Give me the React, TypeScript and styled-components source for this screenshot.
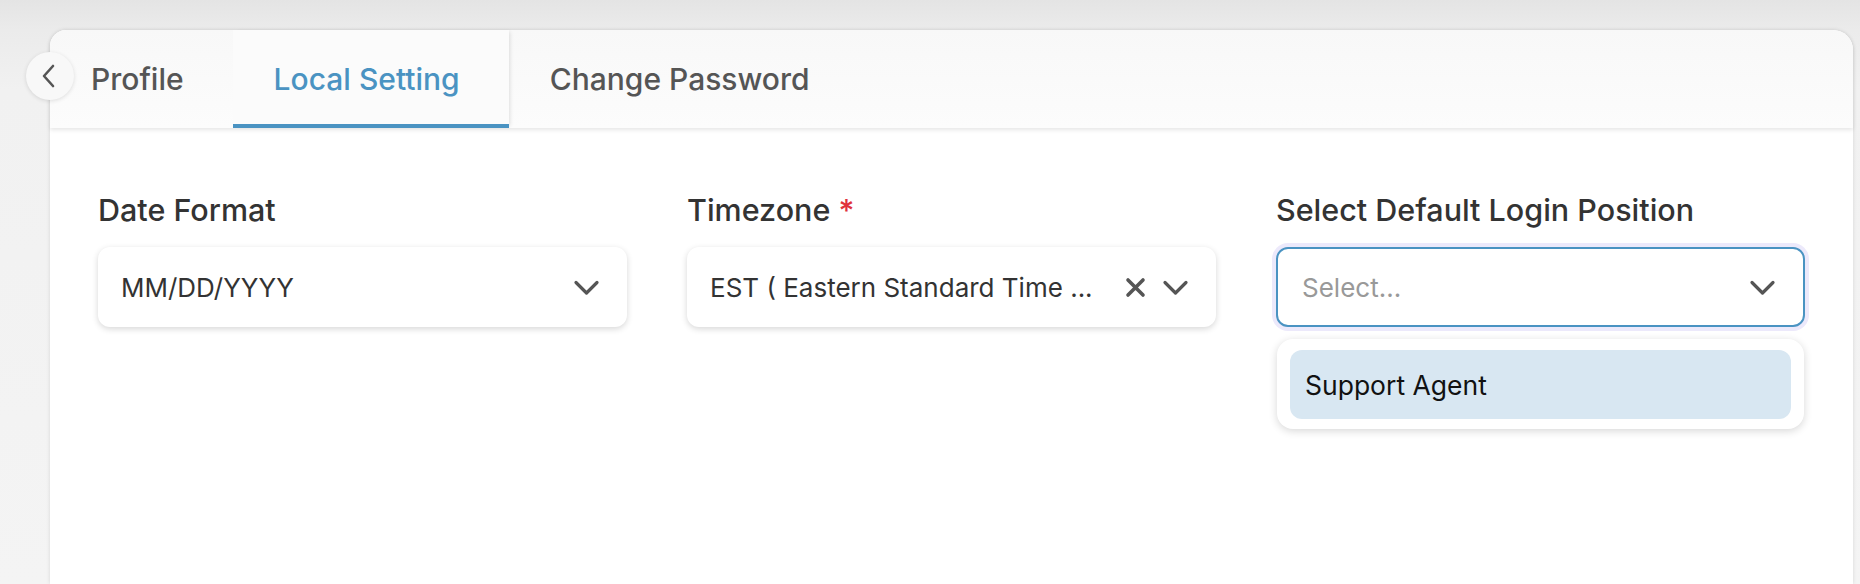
import React from 'react';
import styled, { createGlobalStyle } from 'styled-components';

const tabs = ['Profile', 'Local Setting', 'Change Password'];

const Chevron: React.FC = () => (
  <svg width="27" height="17" viewBox="0 0 27 17" fill="none">
    <path d="M3 3.5 L13.5 14 L24 3.5" stroke="#555" strokeWidth="3.2" strokeLinecap="round" strokeLinejoin="round" />
  </svg>
);

const Cross: React.FC = () => (
  <svg width="21" height="21" viewBox="0 0 21 21" fill="none">
    <path d="M3 3 L18 18 M18 3 L3 18" stroke="#555" strokeWidth="3.6" strokeLinecap="round" />
  </svg>
);

const App: React.FC = () => {
  return (
    <>
      <GlobalStyle />
      <Page>
        <Card>
          <BackButton aria-label="back">
            <svg width="16" height="26" viewBox="0 0 16 26" fill="none">
              <path d="M12 3 L3 13 L12 23" stroke="#555" strokeWidth="2.6" strokeLinecap="round" strokeLinejoin="round" />
            </svg>
          </BackButton>
          <TabBar>
            {tabs.map((t, i) => (
              <Tab key={t} $active={i === 1}>
                {t}
              </Tab>
            ))}
          </TabBar>
          <Body>
            <Field>
              <Label>Date Format</Label>
              <SelectBox>
                <Value>MM/DD/YYYY</Value>
                <Icons>
                  <Chevron />
                </Icons>
              </SelectBox>
            </Field>
            <Field>
              <Label>
                Timezone <Required>*</Required>
              </Label>
              <SelectBox>
                <Value>EST ( Eastern Standard Time ...</Value>
                <Icons>
                  <Cross />
                  <Chevron />
                </Icons>
              </SelectBox>
            </Field>
            <Field>
              <Label>Select Default Login Position</Label>
              <SelectWrap>
                <SelectBox $focused>
                  <Value $placeholder>Select...</Value>
                  <Icons>
                    <Chevron />
                  </Icons>
                </SelectBox>
                <Menu>
                  <Option>Support Agent</Option>
                </Menu>
              </SelectWrap>
            </Field>
          </Body>
        </Card>
      </Page>
    </>
  );
};

const GlobalStyle = createGlobalStyle`
  * { box-sizing: border-box; }
  body {
    margin: 0;
    background: #f3f3f3;
    font-family: Inter, "Noto Sans", sans-serif;
  }
`;

const Page = styled.div`
  height: 584px;
  overflow: hidden;
  padding: 30px 7px 0 50px;
  background: linear-gradient(#e4e4e4 0, #ebebeb 30px, #f1f1f1 90px, #f4f4f4 100%);
`;

const Card = styled.div`
  position: relative;
  height: 100%;
  background: #fff;
  border-radius: 16px 20px 0 0;
  box-shadow: 0 0 4px rgba(0, 0, 0, 0.12);
`;

const BackButton = styled.div`
  position: absolute;
  left: -24px;
  top: 22px;
  width: 48px;
  height: 48px;
  border-radius: 50%;
  background: #f8f8f8;
  box-shadow: 0 1px 4px rgba(0, 0, 0, 0.12);
  display: flex;
  align-items: center;
  justify-content: center;
  padding-right: 3px;
  z-index: 2;
`;

const TabBar = styled.div`
  display: flex;
  height: 98px;
  border-radius: 16px 20px 0 0;
  background: linear-gradient(#f8f8f8, #fcfcfc);
  box-shadow: 0 2px 4px rgba(0, 0, 0, 0.1);
`;

const Tab = styled.div<{ $active?: boolean }>`
  display: flex;
  align-items: center;
  padding: 0 49px 0 41px;
  font-size: 30px;
  font-weight: 500;
  color: ${(p) => (p.$active ? '#4a93c2' : '#555')};
  background: ${(p) => (p.$active ? '#fbfbfb' : 'transparent')};
  box-shadow: ${(p) =>
    p.$active ? 'inset 0 -4px 0 #4a93c2, 3px 0 4px -2px rgba(0,0,0,0.12)' : 'none'};
`;

const Body = styled.div`
  display: grid;
  grid-template-columns: repeat(3, 1fr);
  gap: 60px;
  padding: 64px 48px 0 48px;
`;

const Field = styled.div`
  display: flex;
  flex-direction: column;
`;

const Label = styled.div`
  font-size: 30.5px;
  font-weight: 500;
  line-height: 36px;
  color: #333;
  margin-bottom: 19px;
`;

const Required = styled.span`
  color: #e0333b;
  font-weight: 500;
`;

const SelectWrap = styled.div`
  position: relative;
`;

const SelectBox = styled.div<{ $focused?: boolean }>`
  display: flex;
  align-items: center;
  height: 80px;
  padding: 0 27px 0 ${(p) => (p.$focused ? '24px' : '23px')};
  background: #fff;
  border-radius: 12px;
  border: ${(p) => (p.$focused ? '2px solid #4a93c2' : 'none')};
  box-shadow: ${(p) =>
    p.$focused ? '0 0 0 4px #ece9fb' : '0 2px 6px rgba(0, 0, 0, 0.16)'};
`;

const Value = styled.div<{ $placeholder?: boolean }>`
  flex: 1;
  font-size: 26px;
  color: ${(p) => (p.$placeholder ? '#999' : '#333')};
  white-space: nowrap;
  overflow: hidden;
`;

const Icons = styled.div`
  display: flex;
  align-items: center;
  gap: 16px;
`;

const Menu = styled.div`
  position: absolute;
  top: calc(100% + 12px);
  left: 1px;
  right: 1px;
  padding: 11px 13px 10px;
  background: #fff;
  border-radius: 16px;
  box-shadow: 0 2px 8px rgba(0, 0, 0, 0.16);
`;

const Option = styled.div`
  display: flex;
  align-items: center;
  height: 69px;
  padding-left: 15px;
  border-radius: 12px;
  background: #d8e7f2;
  font-size: 26.5px;
  color: #111;
`;

export default App;
